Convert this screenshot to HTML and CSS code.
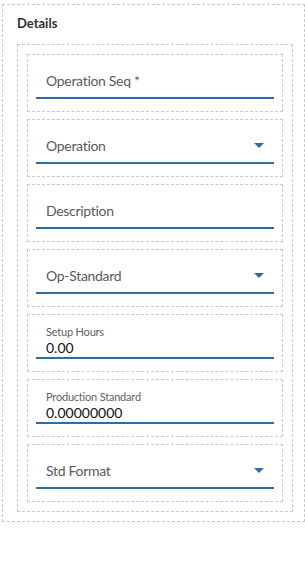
FILE: index.html
```html
<!DOCTYPE html>
<html lang="en">
<head>
  <meta charset="UTF-8">
  <title>Details</title>
  <link rel="stylesheet" href="styles.css">
</head>
<body>
  <div class="section">
    <h3 class="section-title">Details</h3>
    <div class="group">
      <div class="field">
        <div class="control">
          <span class="placeholder">Operation Seq *</span>
        </div>
      </div>
      <div class="field">
        <div class="control">
          <span class="placeholder">Operation</span>
          <span class="caret"></span>
        </div>
      </div>
      <div class="field">
        <div class="control">
          <span class="placeholder">Description</span>
        </div>
      </div>
      <div class="field">
        <div class="control">
          <span class="placeholder">Op-Standard</span>
          <span class="caret"></span>
        </div>
      </div>
      <div class="field">
        <div class="control filled">
          <span class="label">Setup Hours</span>
          <span class="value">0.00</span>
        </div>
      </div>
      <div class="field">
        <div class="control filled">
          <span class="label">Production Standard</span>
          <span class="value">0.00000000</span>
        </div>
      </div>
      <div class="field">
        <div class="control">
          <span class="placeholder">Std Format</span>
          <span class="caret"></span>
        </div>
      </div>
    </div>
  </div>
</body>
</html>
```

FILE: styles.css
```css
* {
  font-family: 'Lato', 'Open Sans', sans-serif;
  box-sizing: border-box;
}
html {
  overflow: hidden;
}
body {
  margin: 0;
  padding: 4px 0 0 2px;
  background: #fff;
}
.section {
  width: 303px;
  border: 1px dashed #c8c8c8;
  padding: 0 0 9px 14px;
}
.section-title {
  margin: 0;
  padding: 10px 0 0 0;
  height: 39px;
  font-size: 13px;
  font-weight: bold;
  line-height: 16px;
  color: #2f2f2f;
}
.group {
  width: 276px;
  border: 1px dashed #c8c8c8;
  padding: 9px;
  display: flex;
  flex-direction: column;
  gap: 7px;
}
.field {
  height: 58px;
  border: 1px dashed #c8c8c8;
  padding: 8px 8px 12px 8px;
}
.control {
  height: 36px;
  border-bottom: 2px solid #2b6ea5;
  display: flex;
  align-items: center;
  padding: 2px 10px 0 10px;
}
.placeholder {
  flex: 1;
  font-size: 14px;
  line-height: 20px;
  letter-spacing: -0.3px;
  color: #5a5a5a;
}
.caret {
  width: 0;
  height: 0;
  margin-bottom: 2px;
  border-left: 5px solid transparent;
  border-right: 5px solid transparent;
  border-top: 5px solid #2b6ea5;
}
.control.filled {
  flex-direction: column;
  align-items: flex-start;
  justify-content: flex-start;
  padding-top: 2px;
}
.label {
  font-size: 11px;
  line-height: 14px;
  letter-spacing: -0.2px;
  color: #5f5f5f;
}
.value {
  font-size: 14px;
  line-height: 18px;
  color: #111;
}
```
